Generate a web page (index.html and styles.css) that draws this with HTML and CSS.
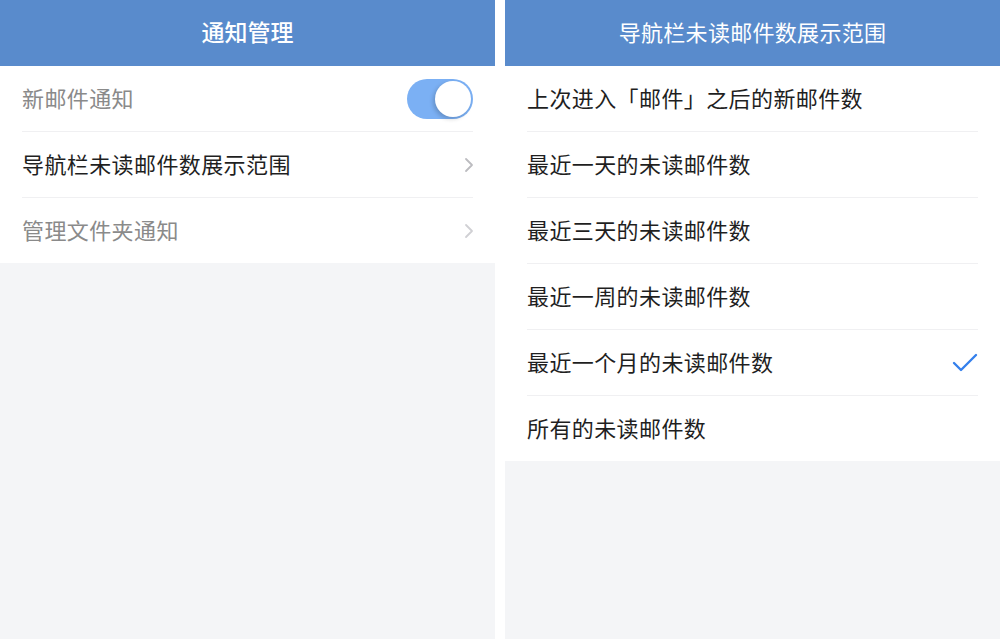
FILE: index.html
```html
<!DOCTYPE html>
<html lang="zh-CN">
<head>
    <meta charset="UTF-8">
    <meta name="viewport" content="width=device-width, initial-scale=1.0">
    <title>通知管理</title>
    <link rel="stylesheet" href="styles.css">
</head>
<body>
    <div class="panel">
        <div class="nav-bar nav-bar-main">通知管理</div>
        <div class="list">
            <div class="row muted">
                <span class="label">新邮件通知</span>
                <span class="switch on"><span class="knob"></span></span>
            </div>
            <div class="row">
                <span class="label">导航栏未读邮件数展示范围</span>
                <svg class="chevron" width="10" height="16" viewBox="0 0 10 16">
                    <path d="M2 2 L8 8 L2 14" fill="none" stroke="#bcbcc0" stroke-width="1.8" stroke-linecap="round" stroke-linejoin="round"/>
                </svg>
            </div>
            <div class="row muted">
                <span class="label">管理文件夹通知</span>
                <svg class="chevron" width="10" height="16" viewBox="0 0 10 16">
                    <path d="M2 2 L8 8 L2 14" fill="none" stroke="#d0d0d4" stroke-width="1.8" stroke-linecap="round" stroke-linejoin="round"/>
                </svg>
            </div>
        </div>
    </div>

    <div class="panel">
        <div class="nav-bar">导航栏未读邮件数展示范围</div>
        <div class="list">
            <div class="row"><span class="label">上次进入「邮件」之后的新邮件数</span></div>
            <div class="row"><span class="label">最近一天的未读邮件数</span></div>
            <div class="row"><span class="label">最近三天的未读邮件数</span></div>
            <div class="row"><span class="label">最近一周的未读邮件数</span></div>
            <div class="row">
                <span class="label">最近一个月的未读邮件数</span>
                <svg class="check" width="26" height="20" viewBox="0 0 26 20">
                    <path d="M2 10 L9 17 L24 2" fill="none" stroke="#3580ec" stroke-width="2.4" stroke-linecap="round" stroke-linejoin="round"/>
                </svg>
            </div>
            <div class="row"><span class="label">所有的未读邮件数</span></div>
        </div>
    </div>
</body>
</html>
```

FILE: styles.css
```css
body {
    margin: 0;
    display: flex;
    gap: 10px;
    background-color: #ffffff;
    font-family: "Noto Sans CJK SC", "Noto Sans", sans-serif;
}
.panel {
    width: 495px;
    height: 639px;
    background-color: #f4f5f7;
    display: flex;
    flex-direction: column;
}
.nav-bar {
    height: 62px;
    padding-bottom: 4px;
    background-color: #598bcc;
    color: #ffffff;
    font-size: 22px;
    letter-spacing: 0.3px;
    display: flex;
    align-items: center;
    justify-content: center;
}
.nav-bar-main {
    font-size: 23px;
    font-weight: 500;
    letter-spacing: 0;
}
.list {
    background-color: #ffffff;
}
.row {
    height: 65px;
    margin: 0 22px;
    display: flex;
    align-items: center;
    justify-content: space-between;
    border-bottom: 1px solid #f0f0f2;
    font-size: 22px;
    letter-spacing: 0.4px;
    color: #1f1f1f;
}
.row:last-child {
    border-bottom: none;
}
.row .label {
    padding-bottom: 4px;
}
.row.muted {
    color: #8a8a8a;
}
.row.muted + .row.muted {
    color: #a0a0a0;
}
.chevron {
    margin-right: -1px;
}
.switch {
    width: 66px;
    height: 40px;
    border-radius: 20px;
    background-color: #7bb0f4;
    position: relative;
}
.switch .knob {
    position: absolute;
    top: 2px;
    right: 2px;
    width: 36px;
    height: 36px;
    border-radius: 50%;
    background-color: #ffffff;
    box-shadow: -2px 2px 4px rgba(0, 0, 0, 0.18);
}
```
